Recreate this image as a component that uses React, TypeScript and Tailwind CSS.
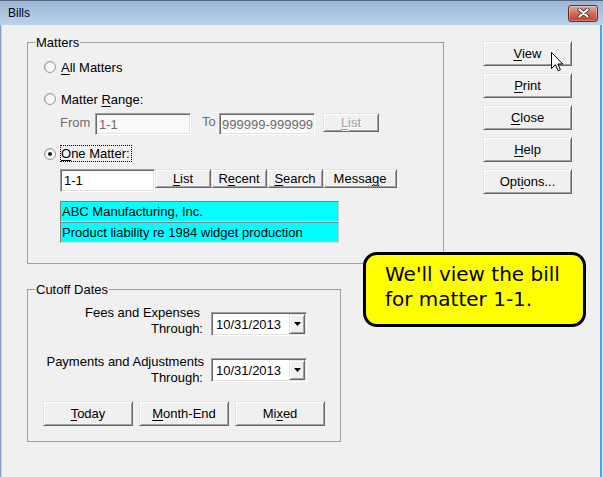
import React from "react";

const U = ({ text, u }: { text: string; u: number }) => (
  <>
    {text.slice(0, u)}
    <span className="underline decoration-1 underline-offset-[2px]">{text[u]}</span>
    {text.slice(u + 1)}
  </>
);

const raised =
  "bg-[#f0f0f0] border border-t-[#e3e3e3] border-l-[#e3e3e3] border-b-[#696969] border-r-[#696969] shadow-[inset_1px_1px_0_#ffffff,inset_-1px_-1px_0_#a0a0a0]";
const sunken =
  "border border-t-[#a0a0a0] border-l-[#a0a0a0] border-b-white border-r-white shadow-[inset_1px_1px_0_#696969,inset_-1px_-1px_0_#e3e3e3]";

function Btn({
  text,
  u,
  className = "",
  disabled = false,
}: {
  text: string;
  u: number;
  className?: string;
  disabled?: boolean;
}) {
  return (
    <div
      className={`flex items-center justify-center shrink-0 ${raised} ${
        disabled ? "text-[#a0a0a0] [text-shadow:1px_1px_0_#ffffff]" : "text-black"
      } ${className}`}
    >
      <span>
        <U text={text} u={u} />
      </span>
    </div>
  );
}

function Radio({ checked = false }: { checked?: boolean }) {
  return (
    <div className="w-[12px] h-[12px] shrink-0 rounded-full border border-[#9a9a9a] bg-gradient-to-br from-[#cfcfcf] to-[#ffffff] flex items-center justify-center">
      <div className="w-[8px] h-[8px] rounded-full bg-gradient-to-br from-[#f4f4f4] to-[#ffffff] flex items-center justify-center">
        {checked && <div className="w-[4px] h-[4px] rounded-full bg-[#1a1a1a]" />}
      </div>
    </div>
  );
}

function DateCombo({ value }: { value: string }) {
  return (
    <div className={`flex w-[96px] h-[24px] bg-white ${sunken}`}>
      <div className="flex-1 flex items-center pl-[4px] text-black">{value}</div>
      <div className={`w-[16px] my-[1px] mr-[1px] flex items-center justify-center ${raised}`}>
        <svg width="7" height="4" viewBox="0 0 7 4">
          <path d="M0 0 H7 L3.5 4 Z" fill="#000" />
        </svg>
      </div>
    </div>
  );
}

export default function App() {
  return (
    <div className="relative w-[603px] h-[477px] overflow-hidden flex flex-col bg-[#f0f0f0] text-[13px] leading-[15px] text-black font-['Liberation_Sans',Arial,sans-serif]">
      {/* Title bar */}
      <div className="h-[25px] shrink-0 flex items-center justify-between pl-[8px] pr-[5px] border-t border-[#55667e] bg-gradient-to-b from-[#9cb5d6] to-[#bcd3eb]">
        <span className="text-[12px]">Bills</span>
        <div className="w-[30px] h-[17px] rounded-[3px] border border-[#6e2a22] bg-gradient-to-b from-[#e3aa9e] via-[#cf6c5e] to-[#c13f31] flex items-center justify-center shadow-[inset_0_0_0_1px_rgba(255,255,255,0.3)]">
          <svg width="13" height="10" viewBox="0 0 13 10">
            <path d="M2.5 1.5 L10.5 8.5 M10.5 1.5 L2.5 8.5" stroke="#4a3a38" strokeWidth="4" strokeLinecap="round" />
            <path d="M2.5 1.5 L10.5 8.5 M10.5 1.5 L2.5 8.5" stroke="#ffffff" strokeWidth="2.2" strokeLinecap="round" />
          </svg>
        </div>
      </div>

      <div className="flex-1 flex">
        <div className="w-[2px] border-l border-[#7f9cc3] bg-[#c2d7ee]" />
        <div className="flex-1 flex items-start pl-[25px] pt-[10px] bg-[#f0f0f0]">
          {/* Left column */}
          <div className="flex flex-col w-[417px]">
            <fieldset className="w-[417px] border border-[#a0a0a0]">
              <legend className="ml-[7px] px-[1px] leading-[15px]">Matters</legend>
              <div className="flex flex-col pt-[9px] pb-[20px]">
                <div className="flex items-center h-[16px] pl-[16px]">
                  <Radio />
                  <span className="ml-[5px]">
                    <U text="All Matters" u={0} />
                  </span>
                </div>
                <div className="flex items-center h-[16px] pl-[16px] mt-[16px]">
                  <Radio />
                  <span className="ml-[5px]">
                    <U text="Matter Range:" u={7} />
                  </span>
                </div>
                <div className="flex items-start h-[22px] pl-[32px] mt-[6px]">
                  <span className="w-[35px] mt-[2px] text-[#6d6d6d]">From</span>
                  <div className={`w-[96px] h-[22px] flex items-center pl-[3px] bg-[#f9f9f9] text-[#6d6d6d] ${sunken}`}>1-1</div>
                  <span className="w-[17px] ml-[11px] mt-[1px] text-[#6d6d6d]">To</span>
                  <div className={`w-[96px] h-[22px] flex items-center pl-[2px] overflow-hidden whitespace-nowrap bg-[#f9f9f9] text-[#6d6d6d] ${sunken}`}>999999-999999</div>
                  <Btn text="List" u={0} disabled className="w-[56px] h-[19px] ml-[8px]" />
                </div>
                <div className="flex items-center h-[17px] pl-[16px] mt-[10px]">
                  <Radio checked />
                  <span className="ml-[4px] border border-dotted border-black h-[17px] pr-[1px]">
                    <U text="One Matter:" u={0} />
                  </span>
                </div>
                <div className="flex items-start pl-[32px] mt-[7px]">
                  <div className={`w-[95px] h-[23px] flex items-center pl-[3px] bg-white ${sunken}`}>1-1</div>
                  <Btn text="List" u={0} className="w-[56px] h-[19px]" />
                  <Btn text="Recent" u={1} className="w-[56px] h-[19px]" />
                  <Btn text="Search" u={0} className="w-[56px] h-[19px]" />
                  <Btn text="Message" u={5} className="w-[74px] h-[19px]" />
                </div>
                <div className="flex flex-col pl-[32px] mt-[9px]">
                  <div className="w-[279px] h-[21px] flex items-center pl-[1px] bg-[#00ffff] border border-t-[#808080] border-l-[#808080] border-b-[#dcdcdc] border-r-[#c8c8c8]">
                    ABC Manufacturing, Inc.
                  </div>
                  <div className="w-[279px] h-[21px] flex items-center pl-[1px] bg-[#00ffff] border border-t-[#808080] border-l-[#808080] border-b-[#dcdcdc] border-r-[#c8c8c8]">
                    Product liability re 1984 widget production
                  </div>
                </div>
              </div>
            </fieldset>

            <fieldset className="w-[314px] mt-[18px] border border-[#a0a0a0]">
              <legend className="ml-[7px] px-[1px] leading-[15px]">Cutoff Dates</legend>
              <div className="flex flex-col pt-[8px] pb-[15px] pl-[15px]">
                <div className="flex items-start">
                  <div className="w-[161px] text-right leading-[16px]">
                    <div className="pr-[4px]">Fees and Expenses</div>
                    <div className="pr-[1px]">Through:</div>
                  </div>
                  <div className="ml-[7px] mt-[7px]">
                    <DateCombo value="10/31/2013" />
                  </div>
                </div>
                <div className="flex items-start mt-[17px]">
                  <div className="w-[161px] text-right leading-[16px]">
                    <div>Payments and Adjustments</div>
                    <div className="pr-[1px]">Through:</div>
                  </div>
                  <div className="ml-[7px] mt-[4px]">
                    <DateCombo value="10/31/2013" />
                  </div>
                </div>
                <div className="flex gap-[6px] mt-[15px]">
                  <Btn text="Today" u={0} className="w-[90px] h-[25px]" />
                  <Btn text="Month-End" u={0} className="w-[90px] h-[25px]" />
                  <Btn text="Mixed" u={2} className="w-[90px] h-[25px]" />
                </div>
              </div>
            </fieldset>
          </div>

          {/* Right column */}
          <div className="flex flex-col gap-[7px] ml-[39px] pt-[6px]">
            <Btn text="View" u={0} className="w-[89px] h-[25px]" />
            <Btn text="Print" u={0} className="w-[89px] h-[25px]" />
            <Btn text="Close" u={0} className="w-[89px] h-[25px]" />
            <Btn text="Help" u={0} className="w-[89px] h-[25px]" />
            <Btn text="Options..." u={3} className="w-[89px] h-[25px]" />
          </div>
        </div>
        <div className="w-[3px] flex">
          <div className="w-[2px] bg-[#4aa6e2]" />
          <div className="w-[1px] bg-[#d3e6f5]" />
        </div>
      </div>

      {/* Callout */}
      <div className="absolute left-[363px] top-[252px] w-[223px] h-[75px] bg-[#ffff00] border-[3px] border-black rounded-[14px] pl-[19px] pt-[7px] text-[20px] leading-[25px] text-black font-['DejaVu_Sans',sans-serif]">
        <div>We'll view the bill</div>
        <div>for matter 1-1.</div>
      </div>

      {/* Mouse cursor */}
      <svg className="absolute left-[551px] top-[52px]" width="13" height="20" viewBox="0 0 13 20">
        <path
          d="M0.5 0.5 L0.5 16.5 L4.5 12.8 L7.2 18.8 L9.4 17.8 L6.8 12 L11.8 12 Z"
          fill="#ffffff"
          stroke="#000000"
          strokeWidth="1"
          strokeLinejoin="miter"
        />
      </svg>
    </div>
  );
}
